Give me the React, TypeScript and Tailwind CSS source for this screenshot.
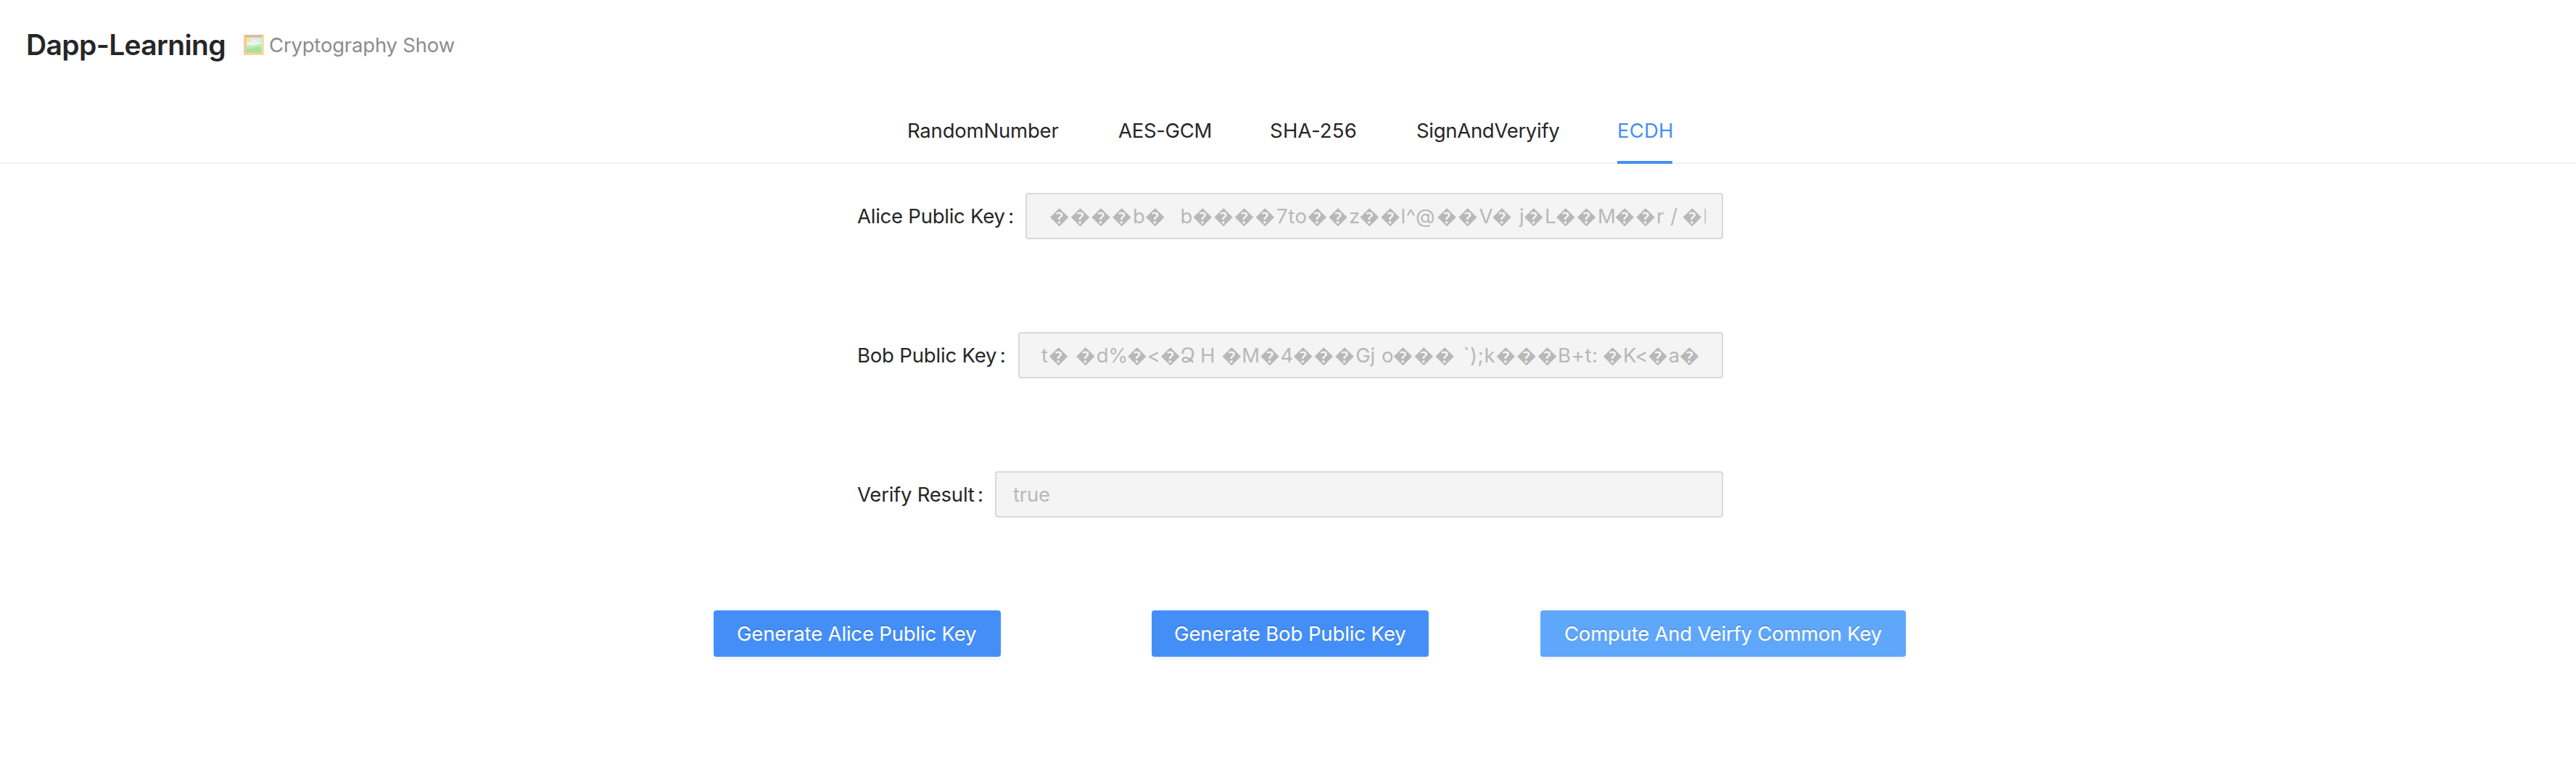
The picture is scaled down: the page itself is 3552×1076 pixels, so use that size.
type Chunk = [text: string, width: number];

const tabs = [
  { name: "RandomNumber", cls: "w-[211px] tracking-[-0.2px]" },
  { name: "AES-GCM", cls: "w-[129px] tracking-[-0.3px]" },
  { name: "SHA-256", cls: "w-[122px] tracking-[0.25px]" },
  { name: "SignAndVeryify", cls: "w-[197px] tracking-[-0.3px]" },
  { name: "ECDH", cls: "w-[76px] text-[#448ff7] tracking-[0.2px]", active: true },
];

const aliceKey: Chunk[] = [
  ["����", 115], ["b", 17], ["�", 48.4], ["b", 17.1], ["����", 115.5], ["7to", 42.6],
  ["��", 57.4], ["z", 14.6], ["��", 56.9], ["l^@", 49.8], ["��", 58.2], ["V", 17.7],
  ["�", 37.8], ["j", 6], ["�", 29], ["L", 15.2], ["��", 57.8], ["M", 23.7], ["��", 57.3],
  ["r /", 35.5], ["�", 29.1], ["l", 8],
];

const bobKey: Chunk[] = [
  ["t", 9.8], ["�", 37.1], ["�", 28.8], ["d%", 42.3], ["�", 27.7], ["<", 18.3], ["�", 27],
  ["Ձ", 28], ["H", 29.5], ["�", 27.8], ["M", 24.9], ["�", 28.3], ["4", 17.5], ["���", 86.2],
  ["Gj", 35.8], ["o", 15.9], ["���", 96.7], ["`);k", 44.9], ["���", 85.7], ["B+t:", 61.6],
  ["�", 28.2], ["K<", 34.3], ["�", 28.7], ["a", 15], ["�", 28],
];

function KeyText({ chunks }: { chunks: Chunk[] }) {
  return (
    <div className="flex overflow-hidden whitespace-pre">
      {chunks.map(([text, width], i) => (
        <span
          key={i}
          className={
            text[0] === "�"
              ? "shrink-0 tracking-[1.17px]"
              : text.length > 2
                ? "shrink-0 tracking-[0.6px]"
                : "shrink-0 tracking-[-0.2px]"
          }
          style={{ width }}
        >
          {text}
        </span>
      ))}
    </div>
  );
}

function PictureIcon() {
  return (
    <svg viewBox="0 0 28 28" className="size-7 opacity-55">
      <rect width="28" height="28" rx="0.5" fill="#f0b93a" />
      <path d="M0 0h28l-4 4H4z" fill="#b98c46" />
      <path d="M0 0l4 4v20l-4 4z" fill="#e3ae48" />
      <path d="M28 0v28l-4-4V4z" fill="#f7c64f" />
      <path d="M0 28l4-4h20l4 4z" fill="#ecbb4c" />
      <rect x="3" y="3" width="22" height="22" fill="#c79a48" />
      <rect x="4" y="4" width="20.500" height="20" fill="#b5e0ee" />
      <path d="M4 11l4-2 4-3 4 1 3 3 5.500 1v6H4z" fill="#dfe9f1" />
      <circle cx="7.6" cy="7.600" r="3.2" fill="#fbd22b" />
      <path d="M4 15c4-1.500 7 .5 10 0s6-3 10.500-2V24H4z" fill="#7fe065" />
      <path d="M4 19.500c6 .5 11-3 20.500-2v6.500H4z" fill="#5ccb49" />
    </svg>
  );
}

type FieldProps = { label: string; labelCls: string; children: any };

function Field({ label, labelCls, children }: FieldProps) {
  return (
    <div className="flex h-16 items-center">
      <div className={"flex shrink-0 whitespace-nowrap " + labelCls}>
        <span>{label}</span>
        <span className="ml-[4.5px]">:</span>
      </div>
      <div className="flex h-16 min-w-0 flex-1 items-center overflow-hidden rounded-[4px] border-2 border-[#d9d9d9] bg-[#f4f4f4] px-[22px] text-[#b8b8b8]">
        {children}
      </div>
    </div>
  );
}

const button =
  "h-16 rounded-[4px] text-white whitespace-nowrap shadow-[0_4px_0_rgba(0,0,0,0.043)] [text-shadow:0_-2px_0_rgba(0,0,0,0.12)] text-left";

export default function App() {
  return (
    <div className="h-[1076px] w-[3552px] overflow-hidden bg-white font-['Inter','Noto_Sans',sans-serif] text-[27.5px] leading-[44px] text-[#262626]">
      <header className="flex h-[134px] items-center pb-[11px] pl-[36px]">
        <h1 className="w-[300px] text-[39px] leading-[64px] font-semibold tracking-[-0.65px]">Dapp-Learning</h1>
        <PictureIcon />
        <span className="ml-[7px] tracking-[-0.2px] text-[#8c8c8c]">Cryptography Show</span>
      </header>

      <nav className="flex h-[92px] justify-center gap-20 border-b-2 border-[#f0f0f0] pl-[5px]">
        {tabs.map((tab) => (
          <div key={tab.name} className={"relative flex h-[92px] items-center whitespace-nowrap " + tab.cls}>
            {tab.name}
            {tab.active && <div className="absolute inset-x-0 bottom-0 h-1 bg-[#448ff7]" />}
          </div>
        ))}
      </nav>

      <main>
        <form className="mt-10 ml-[1182px] flex w-[1194px] flex-col gap-32">
          <Field label="Alice Public Key" labelCls="w-[232px] tracking-[-0.24px]">
            <div className="min-w-0 pl-[9px]">
              <KeyText chunks={aliceKey} />
            </div>
          </Field>
          <Field label="Bob Public Key" labelCls="w-[222px] tracking-[-0.18px]">
            <div className="min-w-0 pl-[8px]">
              <KeyText chunks={bobKey} />
            </div>
          </Field>
          <Field label="Verify Result" labelCls="w-[190px] tracking-[-0.24px]">
            <span className="pl-px tracking-[-0.2px]">true</span>
          </Field>
        </form>

        <div className="mt-32 ml-[984px] flex">
          <button className={button + " w-[396px] bg-[#448ff7] pl-[32px] tracking-[-0.17px]"}>
            Generate Alice Public Key
          </button>
          <button className={button + " ml-[208px] w-[382px] bg-[#448ff7] pl-[31px] tracking-[-0.1px]"}>
            Generate Bob Public Key
          </button>
          <button className={button + " ml-[154px] w-[504px] bg-[#5fa7fb] pl-[33px] tracking-[-0.22px]"}>
            Compute And Veirfy Common Key
          </button>
        </div>
      </main>
    </div>
  );
}
